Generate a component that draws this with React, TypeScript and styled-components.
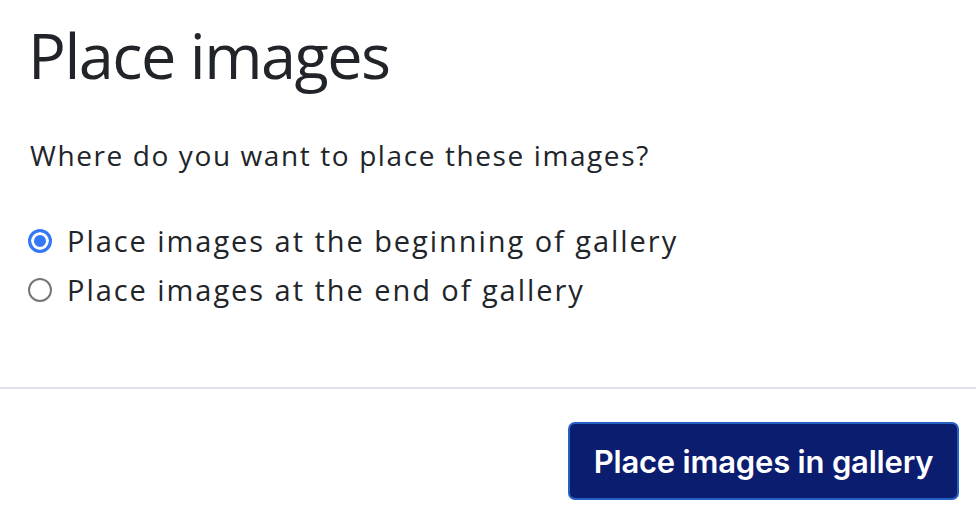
import React, { useState } from "react";
import styled, { createGlobalStyle } from "styled-components";

const Global = createGlobalStyle`
  html, body { margin: 0; padding: 0; background: #fff; }
  body { font-family: "Open Sans", "DejaVu Sans", sans-serif; color: #212529; }
`;

const Dialog = styled.div`
  width: 976px;
  height: 516px;
  display: flex;
  flex-direction: column;
  overflow: hidden;
`;

const Body = styled.div`
  padding: 15px 30px 0 28px;
  flex: 0 0 387px;
  box-sizing: border-box;
`;

const Title = styled.h1`
  margin: 0;
  font-family: "Open Sans", sans-serif;
  font-weight: 400;
  font-size: 63px;
  line-height: 80px;
  letter-spacing: -1.5px;
  color: #212529;
`;

const Question = styled.p`
  margin: 42px 0 0 2px;
  font-family: "Open Sans", sans-serif;
  font-size: 28px;
  line-height: 36px;
  letter-spacing: 1.6px;
  color: #212529;
`;

const Options = styled.div`
  margin-top: 50px;
  display: flex;
  flex-direction: column;
  gap: 13px;
`;

const OptionLabel = styled.label`
  display: flex;
  align-items: center;
  gap: 15px;
  font-family: "Open Sans", sans-serif;
  font-size: 29px;
  line-height: 36px;
  letter-spacing: 1.95px;
  color: #212529;
  cursor: pointer;
`;

const Radio = styled.input`
  appearance: none;
  margin: 0;
  width: 24px;
  height: 24px;
  border-radius: 50%;
  border: 2px solid #767676;
  box-sizing: border-box;
  background: #fff;
  flex: 0 0 auto;
  &:checked {
    border: 3px solid #3478f6;
    box-shadow: inset 0 0 0 3px #fff;
    background: #3478f6;
  }
`;

const Footer = styled.div`
  border-top: 2px solid #dee2e6;
  flex: 1;
  display: flex;
  justify-content: flex-end;
  align-items: flex-start;
  padding: 33px 17px 0 0;
`;

const PrimaryButton = styled.button`
  width: 391px;
  height: 78px;
  background: #0b1d6f;
  border: 2px solid #2560c4;
  border-radius: 7px;
  color: #fff;
  font-family: "Inter", sans-serif;
  font-weight: 600;
  font-size: 31px;
  letter-spacing: -0.2px;
  cursor: pointer;
`;

const options = [
  { id: "beginning", label: "Place images at the beginning of gallery" },
  { id: "end", label: "Place images at the end of gallery" },
];

export default function App() {
  const [choice, setChoice] = useState("beginning");
  return (
    <>
      <Global />
      <Dialog>
        <Body>
          <Title>Place images</Title>
          <Question>Where do you want to place these images?</Question>
          <Options>
            {options.map((o) => (
              <OptionLabel key={o.id}>
                <Radio
                  type="radio"
                  name="place"
                  checked={choice === o.id}
                  onChange={() => setChoice(o.id)}
                />
                {o.label}
              </OptionLabel>
            ))}
          </Options>
        </Body>
        <Footer>
          <PrimaryButton>Place images in gallery</PrimaryButton>
        </Footer>
      </Dialog>
    </>
  );
}
